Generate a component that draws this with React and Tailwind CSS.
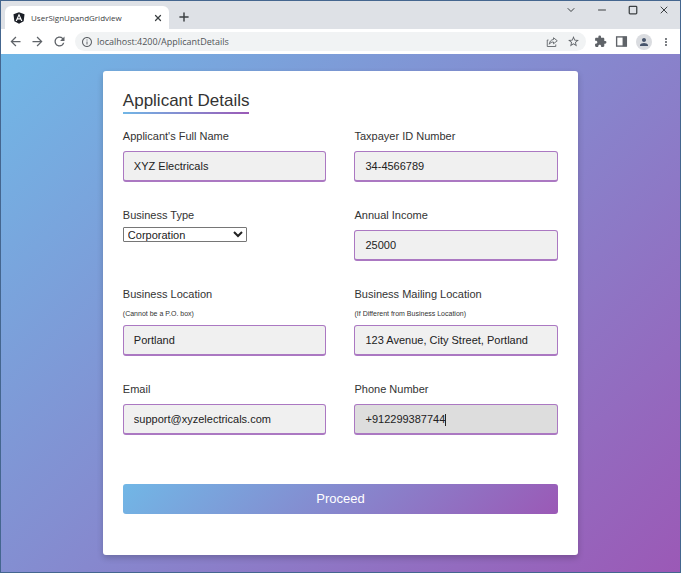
import React, { useState } from 'react';
import {
  MdArrowBack,
  MdArrowForward,
  MdRefresh,
  MdInfoOutline,
  MdStarBorder,
  MdExtension,
  MdPerson,
  MdMoreVert,
} from 'react-icons/md';
import { ChevronDown, Minus, Plus, Square, X } from 'lucide-react';

const AngularLogo = () => (
  <svg viewBox="0 0 24 24" className="h-3 w-3 shrink-0" aria-hidden="true">
    <path d="M12 0.5 L23 4.5 L21.3 18.5 L12 23.7 L2.7 18.5 L1 4.5 Z" fill="#1b1f27" />
    <path
      d="M12 3 L5.2 18.2 H7.8 L9.2 14.8 H14.8 L16.2 18.2 H18.8 Z M12 8 L13.9 12.7 H10.1 Z"
      fill="#ffffff"
      fillRule="evenodd"
    />
  </svg>
);

const ShareIcon = () => (
  <svg viewBox="0 0 24 24" className="h-3 w-3" fill="none" stroke="currentColor" strokeWidth="1.8" aria-hidden="true">
    <path d="M5 8 H2.5 V21 H19.5 V17" />
    <path d="M15 3.5 L22.5 9.5 L15 15.5 V12 C11 12 8.5 13 6.5 16.5 C7 11 10 7.5 15 7 Z" strokeLinejoin="round" />
  </svg>
);

const SidePanelIcon = () => (
  <svg viewBox="0 0 24 24" className="h-[13px] w-[13px]" aria-hidden="true">
    <rect x="3" y="3.5" width="18" height="17" fill="none" stroke="currentColor" strokeWidth="2.5" />
    <rect x="14" y="3" width="7" height="18" fill="currentColor" />
  </svg>
);

const TabStrip = () => (
  <div className="flex h-7 items-start justify-between bg-[#dee1e6] text-[#3c4043]">
    <div className="flex items-center">
      <div className="ml-1 mt-[5px] flex h-[23px] w-[164px] items-center rounded-t-md bg-white pl-2 pr-1.5">
        <AngularLogo />
        <span className="ml-1.5 flex-1 font-['Open_Sans',sans-serif] text-[8px] leading-3">UserSignUpandGridview</span>
        <button type="button" aria-label="Close tab">
          <X className="h-2.5 w-2.5" strokeWidth={3} />
        </button>
      </div>
      <button type="button" aria-label="New tab" className="ml-2 mt-1">
        <Plus className="h-3.5 w-3.5" strokeWidth={2.5} />
      </button>
    </div>
    <div className="flex items-center gap-[19px] pr-2.5 pt-[3px]">
      <button type="button" aria-label="Search tabs">
        <ChevronDown className="h-3 w-3" />
      </button>
      <button type="button" aria-label="Minimize">
        <Minus className="h-3 w-3" />
      </button>
      <button type="button" aria-label="Maximize">
        <Square className="h-3 w-3 p-px" strokeWidth={3} />
      </button>
      <button type="button" aria-label="Close">
        <X className="h-3 w-3" />
      </button>
    </div>
  </div>
);

const Toolbar = () => (
  <div className="flex h-[25px] items-center bg-white pl-[7px] pr-2 text-[#5f6368]">
    <div className="flex items-center gap-[7px]">
      <button type="button" aria-label="Back"><MdArrowBack className="h-[15px] w-[15px]" /></button>
      <button type="button" aria-label="Forward"><MdArrowForward className="h-[15px] w-[15px]" /></button>
      <button type="button" aria-label="Reload"><MdRefresh className="h-[15px] w-[15px]" /></button>
    </div>
    <div className="ml-2 flex h-[19px] flex-1 items-center rounded-full bg-[#f1f3f4] px-1.5">
      <MdInfoOutline className="h-3 w-3 shrink-0" />
      <input
        aria-label="Address"
        defaultValue="localhost:4200/ApplicantDetails"
        className="ml-1 min-w-0 flex-1 bg-transparent font-['Open_Sans',sans-serif] text-[9px] leading-4 text-[#505357] outline-none"
      />
      <div className="flex items-center gap-[9px]">
        <button type="button" aria-label="Share"><ShareIcon /></button>
        <button type="button" aria-label="Bookmark"><MdStarBorder className="h-[13px] w-[13px]" /></button>
      </div>
    </div>
    <div className="ml-2 flex items-center gap-2">
      <button type="button" aria-label="Extensions"><MdExtension className="h-[13px] w-[13px]" /></button>
      <button type="button" aria-label="Side panel"><SidePanelIcon /></button>
      <button type="button" aria-label="Profile" className="rounded-full bg-[#dadce0] p-[2px]">
        <MdPerson className="h-3 w-3 text-[#47546b]" />
      </button>
      <button type="button" aria-label="Menu"><MdMoreVert className="h-3 w-3" /></button>
    </div>
  </div>
);

const Field = ({ label, name, hint, value, onChange, type = 'text', ...rest }) => (
  <div>
    <label htmlFor={name} className="block leading-4">{label}</label>
    {hint && <p className="mt-2 text-[7px] leading-2">{hint}</p>}
    <div className="relative mt-[7px]">
      <input
        id={name}
        name={name}
        type={type}
        value={value}
        onChange={onChange}
        className="peer block h-[31px] w-full rounded-[3px] border border-b-2 border-[#ab78c2] bg-[#f0f0f0] px-2.5 text-[#222222] caret-transparent outline-none focus:bg-[#dddddd]"
        {...rest}
      />
      {/* caret drawn after the typed value */}
      <div
        aria-hidden="true"
        className="pointer-events-none absolute inset-0 hidden items-center overflow-hidden pl-[11px] peer-focus:flex"
      >
        <span className="invisible whitespace-pre">{value}</span>
        <span className="h-3 w-px bg-[#222222]"></span>
      </div>
    </div>
  </div>
);

const App = () => {
  const [form, setForm] = useState({
    fullName: 'XYZ Electricals',
    taxId: '34-4566789',
    businessType: 'Corporation',
    income: '25000',
    location: 'Portland',
    mailing: '123 Avenue, City Street, Portland',
    email: 'support@xyzelectricals.com',
    phone: '+912299387744',
  });

  const handleChange = (e) => {
    setForm({ ...form, [e.target.name]: e.target.value });
  };

  return (
    <div className="flex min-h-screen flex-col border border-[#44668f] font-['Liberation_Sans',Arial,sans-serif]">
      <TabStrip />
      <Toolbar />

      <main className="flex-1 bg-[linear-gradient(135deg,#71b7e6,#9b59b6)] pb-4 pt-[17px]">
        <form
          onSubmit={(e) => e.preventDefault()}
          className="mx-auto w-[70%] rounded-[3px] bg-white px-5 pb-[41px] pt-5 text-[11px] text-[#333333] shadow-[0_3px_6px_rgba(0,0,0,0.2)]"
        >
          <h1 className="inline-block text-[17px] leading-5">
            Applicant Details
            <span className="mt-px block h-[2px] bg-[linear-gradient(135deg,#71b7e6,#9b59b6)]"></span>
          </h1>

          <div className="mt-3.5 grid grid-cols-2 gap-x-7 gap-y-[25px]">
            <Field label="Applicant's Full Name" name="fullName" value={form.fullName} onChange={handleChange} />
            <Field label="Taxpayer ID Number" name="taxId" value={form.taxId} onChange={handleChange} />
            <div>
              <label htmlFor="businessType" className="block leading-4">Business Type</label>
              <select
                id="businessType"
                name="businessType"
                value={form.businessType}
                onChange={handleChange}
                className="mt-1 block h-[15px] w-[124px] rounded-[1px] border border-[#767676] bg-white text-[#222222]"
              >
                <option>Corporation</option>
                <option>Partnership</option>
                <option>Sole Proprietorship</option>
              </select>
            </div>
            <Field label="Annual Income" name="income" value={form.income} onChange={handleChange} />
            <Field
              label="Business Location"
              name="location"
              hint="(Cannot be a P.O. box)"
              value={form.location}
              onChange={handleChange}
            />
            <Field
              label="Business Mailing Location"
              name="mailing"
              hint="(If Different from Business Location)"
              value={form.mailing}
              onChange={handleChange}
            />
            <Field label="Email" name="email" type="email" value={form.email} onChange={handleChange} />
            <Field
              label="Phone Number"
              name="phone"
              type="tel"
              value={form.phone}
              onChange={handleChange}
              autoFocus
            />
          </div>

          <button
            type="submit"
            className="mt-[49px] block h-[30px] w-full rounded-[3px] bg-[linear-gradient(135deg,#71b7e6,#9b59b6)] text-[13px] text-white"
          >
            Proceed
          </button>
        </form>
      </main>
    </div>
  );
};

export default App;
